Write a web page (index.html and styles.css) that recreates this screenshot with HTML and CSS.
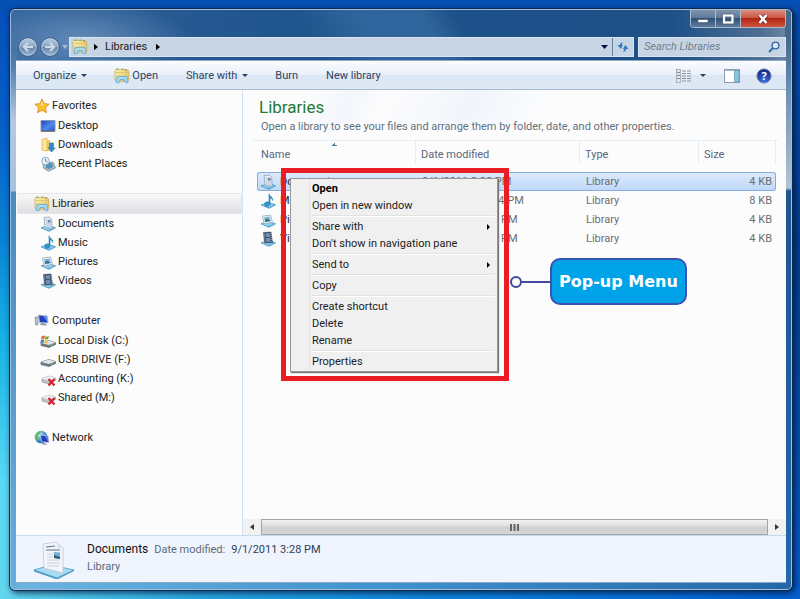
FILE: index.html
```html
<!DOCTYPE html>
<html lang="en">
<head>
<meta charset="utf-8">
<title>Libraries</title>
<link rel="stylesheet" href="styles.css">
</head>
<body>
<svg class="defs" aria-hidden="true">
  <defs>
    <linearGradient id="g-fold" x1="0" y1="0" x2="1" y2="1"><stop offset="0" stop-color="#fff6b8"/><stop offset="1" stop-color="#e3bd55"/></linearGradient>
    <linearGradient id="g-screen" x1="0" y1="0" x2="1" y2="1"><stop offset="0" stop-color="#1c3fb4"/><stop offset=".55" stop-color="#4f8af0"/><stop offset="1" stop-color="#2450c4"/></linearGradient>
    <linearGradient id="g-tray" x1="0" y1="0" x2="1" y2="1"><stop offset="0" stop-color="#d4f1fb"/><stop offset="1" stop-color="#4fa9d6"/></linearGradient>
    <linearGradient id="g-orb" x1="0" y1="0" x2="0" y2="1"><stop offset="0" stop-color="#b9cce0"/><stop offset=".48" stop-color="#8ba6c2"/><stop offset=".52" stop-color="#6787aa"/><stop offset="1" stop-color="#9fbbd6"/></linearGradient>
    <radialGradient id="g-help" cx=".5" cy=".8" r=".8"><stop offset="0" stop-color="#3b73e0"/><stop offset="1" stop-color="#10207c"/></radialGradient>
    <radialGradient id="g-globe" cx=".35" cy=".3" r=".8"><stop offset="0" stop-color="#c5f0ff"/><stop offset=".6" stop-color="#3d93c8"/><stop offset="1" stop-color="#165486"/></radialGradient>
    <symbol id="i-lib" viewBox="0 0 16 16">
      <path d="M1 2.500 2 1.200h3l1 1 1-1h3l1 .8 3 .2.800 1V12l-1 1.200H2L1 12z" fill="url(#g-fold)" stroke="#c6a648" stroke-width=".7"/>
      <path d="M2.500 1.300h2M7.500 1.300h2" stroke="#5aa75a" stroke-width="1"/><path d="M11 2h2" stroke="#d2603c" stroke-width="1"/>
      <path d="M1.400 4.400h13.200" stroke="#d3b45a" stroke-width=".7"/>
      <path d="M2.200 14.600 3.200 8.400h9.800l1 6.200h-2.800l-.9-3H6l-.8 3z" fill="#a5daf0" stroke="#5ca8ce" stroke-width=".8"/>
    </symbol>
    <symbol id="i-star" viewBox="0 0 16 16"><path d="M8 1l2.100 4.700 5 .5-3.700 3.500 1.100 5L8 12.200l-4.500 2.500 1.100-5L.9 6.200l5-.5z" fill="#fbc133" stroke="#dd8b1d" stroke-width=".9"/><path d="M8 3l1.300 3.500 2.800.6-7.500.3 2-.5z" fill="#ffe88e"/></symbol>
    <symbol id="i-desktop" viewBox="0 0 16 16"><path d="M1 2.500h14v10.500H1z" fill="url(#g-screen)" stroke="#8595b6"/><path d="M1 13h14" stroke="#567" stroke-width="1.500"/></symbol>
    <symbol id="i-down" viewBox="0 0 16 16"><path d="M2 2.500 7 1v13l-5-1z" fill="#ffe79a" stroke="#d6a63c" stroke-width=".7"/><path d="M7 3h3v11H7z" fill="#f3c65a"/><path d="M9.500 6h4v5h1.800L11.500 15 8 10.500h1.500z" fill="#2f8bd0" stroke="#176098" stroke-width=".5"/></symbol>
    <symbol id="i-recent" viewBox="0 0 16 16"><path d="M3 8 13 6l2.500 6-7 3.300-5-3z" fill="#aebdca" stroke="#6d8498" stroke-width=".7"/><path d="M6 7h6l1 4-4 2-3-1z" fill="#4f93bd"/><circle cx="5.500" cy="5" r="3.800" fill="#e3eef6" stroke="#8aa4ba" stroke-width=".9"/><path d="M5.500 2.800V5l2 .8" fill="none" stroke="#5a7790" stroke-width=".8"/></symbol>
    <symbol id="i-tray" viewBox="0 0 16 16"><path d="M1 11.800 9 9.500l6.500 2.300L9 15.300z" fill="url(#g-tray)" stroke="#3c93bf" stroke-width=".8"/></symbol>
    <symbol id="i-doc" viewBox="0 0 16 16"><use href="#i-tray"/><path d="M4 1.500 9 1l2.600 2 .6 9.300L5 11.500z" fill="#e6ecf4" stroke="#8da1b8" stroke-width=".8"/><path d="M5.500 4h4M6 6h5M6 8h5M6 10h5" stroke="#a7b6c8" stroke-width=".8"/><path d="M8 4h2.500v2.500H8z" fill="#5c8eb5"/></symbol>
    <symbol id="i-music" viewBox="0 0 16 16"><use href="#i-tray"/><path d="M9 .8c.5 3 4.500 3 3.600 6.700C12 5.500 11 5.300 10 5v6c-.5 3-5.500 3.200-5.500.3 0-2.300 3-3 4.500-2.200z" fill="#2c98cd" stroke="#16719f" stroke-width=".5"/></symbol>
    <symbol id="i-pic" viewBox="0 0 16 16"><use href="#i-tray"/><path d="M2.500 4 10.500 3l2 7.500-8.500 1z" fill="#f1f6fa" stroke="#90a8bc" stroke-width=".8"/><path d="M4 5.200 9.600 4.500l1.200 4.800-5.800.8z" fill="#7fb6d8"/><path d="m4.800 8 2.600-1.600 3.200 2.600-5.700 1z" fill="#3b6c8e"/></symbol>
    <symbol id="i-video" viewBox="0 0 16 16"><use href="#i-tray"/><path d="M3.500 1.500 11 1l1.500 10.500-8 .6z" fill="#3f4d63" stroke="#2d394c" stroke-width=".5"/><path d="M5.500 2.500 9.700 2.200l.4 3.500-4.200.3zM6 7l4.200-.3.400 4-4.200.3z" fill="#6d93bc"/><path d="M4.300 2.500l1 9M10.700 2l1.100 9" stroke="#c7d3e0" stroke-width=".7" stroke-dasharray="1 1"/></symbol>
    <symbol id="i-pc" viewBox="0 0 16 16"><path d="M1 4h3v8H1.500z" fill="#b7c4d2" stroke="#71859c" stroke-width=".6"/><path d="M4.500 2 13 3l1 7-8.500-.5z" fill="#1f3fc4" stroke="#a9b7cc"/><path d="M9 3l3.500.4.600 5z" fill="#6b93f0"/><path d="m7 10 4 .4 2.500 2.100L6 12z" fill="#8493a8"/></symbol>
    <symbol id="i-disk" viewBox="0 0 16 16"><path d="m1 10 8-2.500 6.500 2v2l-6.500 3-8-2z" fill="#6f7b85" stroke="#4c565e" stroke-width=".6"/><path d="m1 10 8-2.500 6.500 2L9 12z" fill="#dfe4e8"/><path d="M11 12.700l2-1" stroke="#5cdb4a"/></symbol>
    <symbol id="i-cdisk" viewBox="0 0 16 16"><use href="#i-disk"/><path d="M1.500 3.500q2-1.500 3.500-.6L4.300 6Q3 5.500 1 6.500z" fill="#e26a38"/><path d="M5.500 3Q7 4 9 3l-.7 3Q6.500 7 4.800 6z" fill="#69ad3e"/><path d="M.9 7Q2.500 6 4.200 6.600l-.7 3Q2 9.200.2 10z" fill="#3b82ce"/><path d="M4.700 6.700Q6 7.700 8.200 6.700l-.7 3Q5.500 10.800 4 9.800z" fill="#f2c33b"/></symbol>
    <symbol id="i-xdisk" viewBox="0 0 16 16"><path d="m2 7.500 8-2.500 5.500 2v2.500L9 13l-7-2z" fill="#b9c0c6" stroke="#8d969e" stroke-width=".6"/><path d="m2 7.500 8-2.500 5.500 2L9 10z" fill="#eef0f2"/><path d="m8.500 8 6 6.500m0-6.500-6 6.500" stroke="#d3222a" stroke-width="2.300"/></symbol>
    <symbol id="i-net" viewBox="0 0 16 16"><circle cx="7" cy="7" r="6.300" fill="url(#g-globe)"/><path d="M2 4q2-3 5-3L6 4 3.500 5.500 5 8 3 11Q.5 8 2 4z" fill="#69b567"/><path d="m6.500 5 7.500 1 1 6.500-7.500-.7z" fill="#1d3cc0" stroke="#bccadb" stroke-width=".8"/><path d="m10.500 6 3 .4.700 5z" fill="#668af0"/><path d="m8.500 13 3 .2 1.800 1.500-5-.3z" fill="#8493a8"/></symbol>
  </defs>
</svg>

<div class="window">
  <header class="titlebar">
    <div class="caption">
      <button aria-label="Minimize"><svg viewBox="0 0 14 12" width="14" height="12"><rect x="2" y="6.500" width="10" height="3" fill="#fff" stroke="#526174" stroke-width=".7"/></svg></button>
      <button aria-label="Maximize"><svg viewBox="0 0 14 12" width="14" height="12"><rect x="3" y="2.500" width="8.500" height="7" fill="none" stroke="#4b5a6e" stroke-width="3.500"/><rect x="3" y="2.500" width="8.500" height="7" fill="none" stroke="#fff" stroke-width="2.200"/></svg></button>
      <button class="close" aria-label="Close"><svg viewBox="0 0 14 12" width="14" height="12"><path d="m3.500 2 7 8m0-8-7 8" stroke="#6b2a2a" stroke-width="3.800"/><path d="m3.500 2 7 8m0-8-7 8" stroke="#fff" stroke-width="2.500"/></svg></button>
    </div>
    <div class="navbar">
      <button class="orb" aria-label="Back"><svg viewBox="0 0 20 20" width="20" height="20"><circle cx="10" cy="10" r="9.300" fill="url(#g-orb)" stroke="#38597d"/><circle cx="10" cy="10" r="8.300" fill="none" stroke="#c2d3e4" stroke-width=".7"/><path d="M15 10H6m4-4-4 4 4 4" fill="none" stroke="#ccdae8" stroke-width="2.200"/></svg></button>
      <button class="orb" aria-label="Forward"><svg viewBox="0 0 20 20" width="20" height="20"><circle cx="10" cy="10" r="9.300" fill="url(#g-orb)" stroke="#38597d"/><circle cx="10" cy="10" r="8.300" fill="none" stroke="#c2d3e4" stroke-width=".7"/><path d="M5 10h9m-4-4 4 4-4 4" fill="none" stroke="#ccdae8" stroke-width="2.200"/></svg></button>
      <button class="recent" aria-label="Recent pages"><svg viewBox="0 0 6 4" width="6" height="4"><path d="M0 0h6L3 4z" fill="#a5bad2"/></svg></button>
      <div class="address">
        <svg class="ico" aria-hidden="true"><use href="#i-lib"/></svg>
        <svg class="crumb" viewBox="0 0 5 8" aria-hidden="true"><path d="M0 0v8l5-4z"/></svg>
        <a href="#">Libraries</a>
        <svg class="crumb" viewBox="0 0 5 8" aria-hidden="true"><path d="M0 0v8l5-4z"/></svg>
        <button class="drop" aria-label="Previous locations"><svg viewBox="0 0 7 4" width="7" height="4"><path d="M0 0h7L3.500 4z" fill="#08133c"/></svg></button>
        <button class="refresh" aria-label="Refresh"><svg viewBox="0 0 12 12" width="12" height="12"><path d="M6 1.500Q3 1.200 3 4H.6l3.100 4L6 4H4.800Q4.800 2.500 6 1.500zM6 10.700q3 .3 3-2.700h2.400L8.500 4 5.800 8h1.400q0 1.700-1.200 2.700z" fill="#2f79c4"/></svg></button>
      </div>
      <label class="search">
        <input type="search" aria-label="Search Libraries" placeholder="Search Libraries">
        <svg viewBox="0 0 12 12" width="12" height="12" aria-hidden="true"><circle cx="7.500" cy="4.500" r="3.400" fill="#dbe8f3" stroke="#3468a6" stroke-width="1.400"/><path d="M5 7 1 11" stroke="#3468a6" stroke-width="2"/></svg>
      </label>
    </div>
  </header>

  <div class="client">
    <div class="toolbar" role="toolbar" aria-label="Commands">
      <button class="organize">Organize <i class="caret"></i></button>
      <button class="open"><svg class="ico" aria-hidden="true"><use href="#i-lib"/></svg>Open</button>
      <button class="share">Share with <i class="caret"></i></button>
      <button class="burn">Burn</button>
      <button>New library</button>
      <div class="tools">
        <button aria-label="Change your view"><svg viewBox="0 0 16 14" width="16" height="14"><rect x=".5" y=".5" width="4" height="13" fill="#e2e3e8" stroke="#a3a5ae" stroke-width=".8"/><path d="M1 3.500h3M1 6.500h3M1 9.500h3" stroke="#888c98"/><path d="M6 2h4m1 0h4M6 4.500h4m1 0h4M6 7h4m1 0h4M6 9.500h4m1 0h4M6 12h4m1 0h4" stroke="#8794a8"/></svg></button>
        <button aria-label="More view options"><i class="caret"></i></button>
        <button class="pane" aria-label="Show the preview pane"><svg viewBox="0 0 16 14" width="16" height="14"><rect x=".5" y=".5" width="15" height="13" fill="#fff" stroke="#8b9bac"/><path d="M1 1.500h14" stroke="#a9b9ca"/><rect x="10.500" y="1.500" width="4.500" height="11.500" fill="#84c3df" stroke="#6b9fb8" stroke-width=".7"/></svg></button>
        <button class="help" aria-label="Help"><svg viewBox="0 0 16 16" width="16" height="16"><circle cx="8" cy="8" r="7.300" fill="url(#g-help)" stroke="#a9b4ca"/><text x="8" y="12" text-anchor="middle">?</text></svg></button>
      </div>
    </div>

    <div class="body">
      <nav class="sidebar">
        <ul>
          <li class="head"><a href="#"><svg class="ico"><use href="#i-star"/></svg>Favorites</a></li>
          <li><a href="#"><svg class="ico"><use href="#i-desktop"/></svg>Desktop</a></li>
          <li><a href="#"><svg class="ico"><use href="#i-down"/></svg>Downloads</a></li>
          <li><a href="#"><svg class="ico"><use href="#i-recent"/></svg>Recent Places</a></li>
        </ul>
        <ul>
          <li class="head current"><a href="#"><svg class="ico"><use href="#i-lib"/></svg>Libraries</a></li>
          <li><a href="#"><svg class="ico"><use href="#i-doc"/></svg>Documents</a></li>
          <li><a href="#"><svg class="ico"><use href="#i-music"/></svg>Music</a></li>
          <li><a href="#"><svg class="ico"><use href="#i-pic"/></svg>Pictures</a></li>
          <li><a href="#"><svg class="ico"><use href="#i-video"/></svg>Videos</a></li>
        </ul>
        <ul>
          <li class="head"><a href="#"><svg class="ico"><use href="#i-pc"/></svg>Computer</a></li>
          <li><a href="#"><svg class="ico"><use href="#i-cdisk"/></svg>Local Disk (C:)</a></li>
          <li><a href="#"><svg class="ico"><use href="#i-disk"/></svg>USB DRIVE (F:)</a></li>
          <li><a href="#"><svg class="ico"><use href="#i-xdisk"/></svg>Accounting (K:)</a></li>
          <li><a href="#"><svg class="ico"><use href="#i-xdisk"/></svg>Shared (M:)</a></li>
        </ul>
        <ul>
          <li class="head"><a href="#"><svg class="ico"><use href="#i-net"/></svg>Network</a></li>
        </ul>
      </nav>

      <main class="content">
        <h1>Libraries</h1>
        <p class="hint">Open a library to see your files and arrange them by folder, date, and other properties.</p>
        <div class="list">
          <table>
            <colgroup><col class="c-name"><col class="c-date"><col class="c-type"><col></colgroup>
            <thead><tr><th class="sorted">Name</th><th>Date modified</th><th>Type</th><th>Size</th></tr></thead>
            <tbody>
              <tr class="selected"><td><span class="file"><svg class="ico"><use href="#i-doc"/></svg>Documents</span></td><td>9/1/2011 3:28 PM</td><td>Library</td><td>4 KB</td></tr>
              <tr><td><span class="file"><svg class="ico"><use href="#i-music"/></svg>Music</span></td><td>8/31/2011 12:44 PM</td><td>Library</td><td>8 KB</td></tr>
              <tr><td><span class="file"><svg class="ico"><use href="#i-pic"/></svg>Pictures</span></td><td>8/31/2011 2:15 PM</td><td>Library</td><td>4 KB</td></tr>
              <tr><td><span class="file"><svg class="ico"><use href="#i-video"/></svg>Videos</span></td><td>8/31/2011 2:15 PM</td><td>Library</td><td>4 KB</td></tr>
            </tbody>
          </table>
        </div>
        <div class="scrollbar">
          <button aria-label="Scroll left"><svg viewBox="0 0 4 6" width="4" height="6"><path d="M4 0v6L0 3z" fill="#333"/></svg></button>
          <div class="thumb"><svg viewBox="0 0 9 7" width="9" height="7"><path d="M1 0v7M4.500 0v7M8 0v7" stroke="#666" stroke-width="2"/></svg></div>
          <button aria-label="Scroll right"><svg viewBox="0 0 4 6" width="4" height="6"><path d="M0 0v6l4-3z" fill="#333"/></svg></button>
        </div>

        <div class="frame">
          <div class="menu" role="menu">
            <button role="menuitem" class="default">Open</button>
            <button role="menuitem">Open in new window</button>
            <hr>
            <button role="menuitem" class="sub">Share with</button>
            <button role="menuitem">Don't show in navigation pane</button>
            <hr>
            <button role="menuitem" class="sub">Send to</button>
            <hr>
            <button role="menuitem">Copy</button>
            <hr>
            <button role="menuitem">Create shortcut</button>
            <button role="menuitem">Delete</button>
            <button role="menuitem">Rename</button>
            <hr>
            <button role="menuitem">Properties</button>
          </div>
        </div>
        <div class="callout"><i class="dot"></i><i class="line"></i><strong>Pop-up Menu</strong></div>
      </main>
    </div>

    <footer class="details">
      <svg viewBox="0 0 42 38" width="42" height="38" aria-hidden="true">
        <path d="M1 29 18 24l23 5-17 8z" fill="#a8dcf2" stroke="#5ba9d0"/><path d="M1 29v1.500L24 38.500 41 30v-1L24 37z" fill="#4b98c8"/>
        <path d="M10 3 24 1l6 6v25L11 27z" fill="#f4f5fa" stroke="#c3c8d6" stroke-width=".8"/><path d="M24 1v6h6z" fill="#dde2ee"/>
        <path d="M13 6l9-1M13 9h14" stroke="#57758b" stroke-width="1.200"/><path d="M14 13h6M14 16h6M14 19h13M14 22h13M14 25h12" stroke="#cdd0de" stroke-width="1.200"/>
        <path d="M21 11l6 .5V18l-6-1z" fill="#76afd1"/><path d="m21 14 6 2v2l-6-1z" fill="#2d627f"/>
      </svg>
      <div>
        <p><span class="name">Documents</span><span>Date modified:</span><span class="value">9/1/2011 3:28 PM</span></p>
        <p>Library</p>
      </div>
    </footer>
  </div>
</div>
</body>
</html>
```

FILE: styles.css
```css
* { box-sizing: border-box; }

body {
  margin: 0;
  min-height: 100vh;
  padding: 9px 8px 9px 10px;
  display: flex;
  font: 11px/16px Roboto, "Open Sans", sans-serif;
  color: #222;
  background:
    linear-gradient(to right, #62d6ee, #2aa8e4 25%, #0d84dc 55%, #0560d2) bottom / 100% 14px no-repeat,
    linear-gradient(#0550bd, #0560c8 20%, #0a84d4 38%, #16b4e6 55%, #58d8f4 78%, #62d6ee) 0 14px / 40px 100% no-repeat,
    linear-gradient(#0550b4, #033e90 40%, #0450ae 75%, #0560d2);
}

button {
  font: inherit;
  color: inherit;
  background: none;
  border: 0;
  padding: 0;
  display: flex;
  align-items: center;
}

a { color: inherit; text-decoration: none; }
p, h1, ul { margin: 0; padding: 0; }
svg { display: block; flex: none; }
.defs { position: absolute; width: 0; height: 0; }
.ico { width: 16px; height: 16px; }
.caret { border: 3px solid transparent; border-top: 3px solid #24405f; border-bottom: 0; }

.window {
  flex: 1;
  display: flex;
  flex-direction: column;
  padding: 0 5px 6px;
  border: 1px solid #a3bdd6;
  border-radius: 5px;
  box-shadow: 0 0 0 1px #0b2c55, 2px 2px 6px 1px rgba(0, 15, 50, .75);
  background:
    linear-gradient(#3a6da300 40px, #b5c9de 110px, #a9c1da 181px, #4a8bbd 182px, #64aede) left / 6px 100% no-repeat,
    linear-gradient(#43698f 30px, #6c8fb4 80px, #b2c4d8 178px, #1d5590 181px, #2468aa) right / 6px 100% no-repeat,
    linear-gradient(to right, #6ab5e2, #3f90cc 50%, #2468aa) bottom / 100% 8px no-repeat,
    radial-gradient(ellipse 110px 40px at 70px 30px, rgba(150, 180, 215, .5), transparent) no-repeat,
    linear-gradient(60deg, transparent 38%, rgba(75, 130, 185, .4) 46%, rgba(75, 130, 185, .4) 54%, transparent 58%) top / 100% 52px no-repeat,
    linear-gradient(to right, #34659c, #2a5c94 15%, #1e538b 38%, #1d5088 68%, #1e5188 85%, #4d6e93 96%, #7289a5);
}

.titlebar { display: flex; flex-direction: column; }

.caption {
  align-self: flex-end;
  display: flex;
  height: 18px;
  border: 1px solid #a9b9cc;
  border-top: 0;
  border-radius: 0 0 4px 4px;
  overflow: hidden;
}
.caption button {
  width: 25px;
  justify-content: center;
  border-right: 1px solid #a9b9cc;
  background: linear-gradient(#7f94ad, #5f7b9a 45%, #2f5176 50%, #5f7c9c);
}
.caption .close {
  width: 44px;
  border: 0;
  background: linear-gradient(#dd8f80, #ca5643 45%, #b02513 50%, #d0543c);
}

.navbar { display: flex; align-items: center; height: 32px; padding: 5px 0 0 2px; }
.orb { margin-right: 2px; }
.recent { width: 7px; margin-right: 2px; }

.address, .search {
  height: 20px;
  display: flex;
  align-items: center;
  background: #c6d4e3;
  border: 1px solid #dbe6f0;
}
.address { flex: 1; padding-left: 2px; margin-left: -2px; }
.address a { margin: 0 9px 0 7px; }
.crumb { width: 4px; height: 8px; }
.address .ico + .crumb { margin-left: 6px; }
.drop { margin-left: auto; margin-right: 4px; }
.refresh { width: 21px; height: 18px; justify-content: center; border-left: 1px solid #6385a6; }
.search { width: 148px; margin-left: 4px; padding: 0 5px; }
.search input {
  flex: 1;
  min-width: 0;
  border: 0;
  padding: 0;
  background: none;
  font: italic 11px/16px Roboto, "Open Sans", sans-serif;
}
.search input::placeholder { color: #71808f; opacity: 1; }

.client {
  flex: 1;
  display: flex;
  flex-direction: column;
  border: 1px solid #8fa9c2;
  border-width: 1px 0;
  background: #fcfcfd;
}

.toolbar {
  display: flex;
  align-items: center;
  height: 29px;
  padding: 1px 14px 0 17px;
  color: #2b4565;
  border-bottom: 1px solid #a9bccf;
  background: linear-gradient(#fafcff, #e9f0f9 49%, #dce6f4 50%, #dde8f5);
}
.toolbar button { gap: 5px; }
.toolbar .organize { margin-right: 27px; }
.toolbar .open { gap: 2px; margin-right: 28px; }
.toolbar .share { margin-right: 27px; }
.toolbar .burn { margin-right: 28px; }
.tools { margin-left: auto; display: flex; align-items: center; gap: 8px; }
.tools .pane { margin-left: 10px; }
.tools .help { margin-left: 8px; }
.help text { font: bold 11px "Open Sans", sans-serif; fill: #fff; }

.body { flex: 1; display: flex; }

.sidebar {
  width: 227px;
  padding: 5px 0;
  border-right: 1px solid #d5e2f0;
  display: flex;
  flex-direction: column;
  gap: 20px;
}
.sidebar ul { list-style: none; }
.sidebar li { height: 19px; padding-left: 23px; margin-left: 1px; }
.sidebar .head { height: 21px; padding-left: 17px; }
.sidebar a { height: 100%; display: flex; align-items: center; gap: 2px; }
.sidebar .current {
  border: 1px solid #e6e6e8;
  border-left: 0;
  border-radius: 2px;
  background: linear-gradient(#f8f8f9, #dfe0e3);
}

.content {
  flex: 1;
  min-width: 0;
  position: relative;
  display: flex;
  flex-direction: column;
  padding-top: 5px;
  background:
    linear-gradient(115deg, transparent 12%, #f3f6fc 20%, transparent 26%, #f1f5fb 42%, #f7fafd 50%, transparent 56%) top / 100% 34px no-repeat;
}
h1 { padding-left: 16px; font-size: 17px; line-height: 24px; font-weight: 400; color: #1f7a34; }
.hint { padding-left: 18px; color: #62707f; }

.list { margin: 5px 8px 0 10px; padding: 0 2px 0 4px; border-top: 1px solid #e3edf7; flex: 1; }
table { width: 100%; table-layout: fixed; border-spacing: 0; color: #6d6d6d; }
.c-name { width: 159px; }
.c-date { width: 164px; }
.c-type { width: 119px; }
th {
  height: 31px;
  padding: 0 0 4px 5px;
  text-align: left;
  font-weight: 400;
  color: #58687c;
  background: linear-gradient(#e3edf7, #e3edf7) right top / 1px 22px no-repeat;
}
th.sorted {
  padding-left: 4px;
  background:
    linear-gradient(to bottom right, transparent 50%, #4b8098 50%) 74px 2px / 3px 3px no-repeat,
    linear-gradient(to bottom left, transparent 50%, #4b8098 50%) 77px 2px / 3px 3px no-repeat,
    linear-gradient(#e3edf7, #e3edf7) right top / 1px 22px no-repeat;
}
td { height: 19px; padding: 0 0 0 6px; line-height: 17px; white-space: nowrap; }
td:first-child { padding-left: 3px; color: #222; }
td:last-child { text-align: right; padding-right: 4px; }
.file { display: flex; align-items: center; gap: 4px; }
.selected td { border: 1px solid #84acdd; border-width: 1px 0; background: linear-gradient(#dceafc, #bfd8f8); }
.selected td:first-child { border-left-width: 1px; border-radius: 3px 0 0 3px; padding-left: 2px; }
.selected td:last-child { border-right-width: 1px; border-radius: 0 3px 3px 0; padding-right: 3px; }

.scrollbar { display: flex; height: 16px; background: #f1f1f2; }
.scrollbar button { width: 18px; justify-content: center; }
.scrollbar .thumb {
  flex: 1;
  display: flex;
  align-items: center;
  justify-content: center;
  border: 1px solid #a5a5a7;
  background: linear-gradient(#f2f2f3, #dededf 45%, #cfcfd1 50%, #d6d6d8);
}

.frame {
  position: absolute;
  left: 38px;
  top: 78px;
  width: 228px;
  padding: 5px 6px 4px 4px;
  border: 5px solid #ec1c24;
}
.menu {
  padding: 1px 2px 1px 1px;
  border: 1px solid #979797;
  background: linear-gradient(#e2e2e2, #e2e2e2) 18px 0 / 1px 100% no-repeat #f0f0f0;
  box-shadow: 1px 1px 1px #777;
}
.menu button { width: 100%; height: 17px; padding-left: 20px; color: #222; }
.menu .default { font-weight: 700; color: #000; }
.menu .sub::after {
  content: "";
  margin: 0 5px 0 auto;
  border: 3px solid transparent;
  border-left: 3px solid #000;
  border-right: 0;
}
.menu hr { height: 2px; margin: 1px 0 1px 19px; border: 0; border-top: 1px solid #e2e2e2; border-bottom: 1px solid #fff; }

.callout { position: absolute; left: 267px; top: 168px; display: flex; align-items: center; }
.dot { width: 12px; height: 12px; border: 2px solid #40489f; border-radius: 50%; background: #fff; }
.line { width: 28px; height: 2px; background: #40489f; }
.callout strong {
  padding: 0 7px;
  border: 2px solid #3b52b8;
  border-radius: 10px;
  background: #00a2e8;
  color: #fff;
  font: 700 16px/43px "DejaVu Sans", sans-serif;
  white-space: nowrap;
}

.details {
  height: 47px;
  display: flex;
  gap: 12px;
  padding: 5px 17px;
  color: #5a6b80;
  background: #f0f4fc;
  border-top: 1px solid #c8d9ea;
}
.details p { display: flex; gap: 6px; line-height: 17px; }
.details .name { font-size: 12px; color: #111; }
.details .value { color: #2c4059; }
```
